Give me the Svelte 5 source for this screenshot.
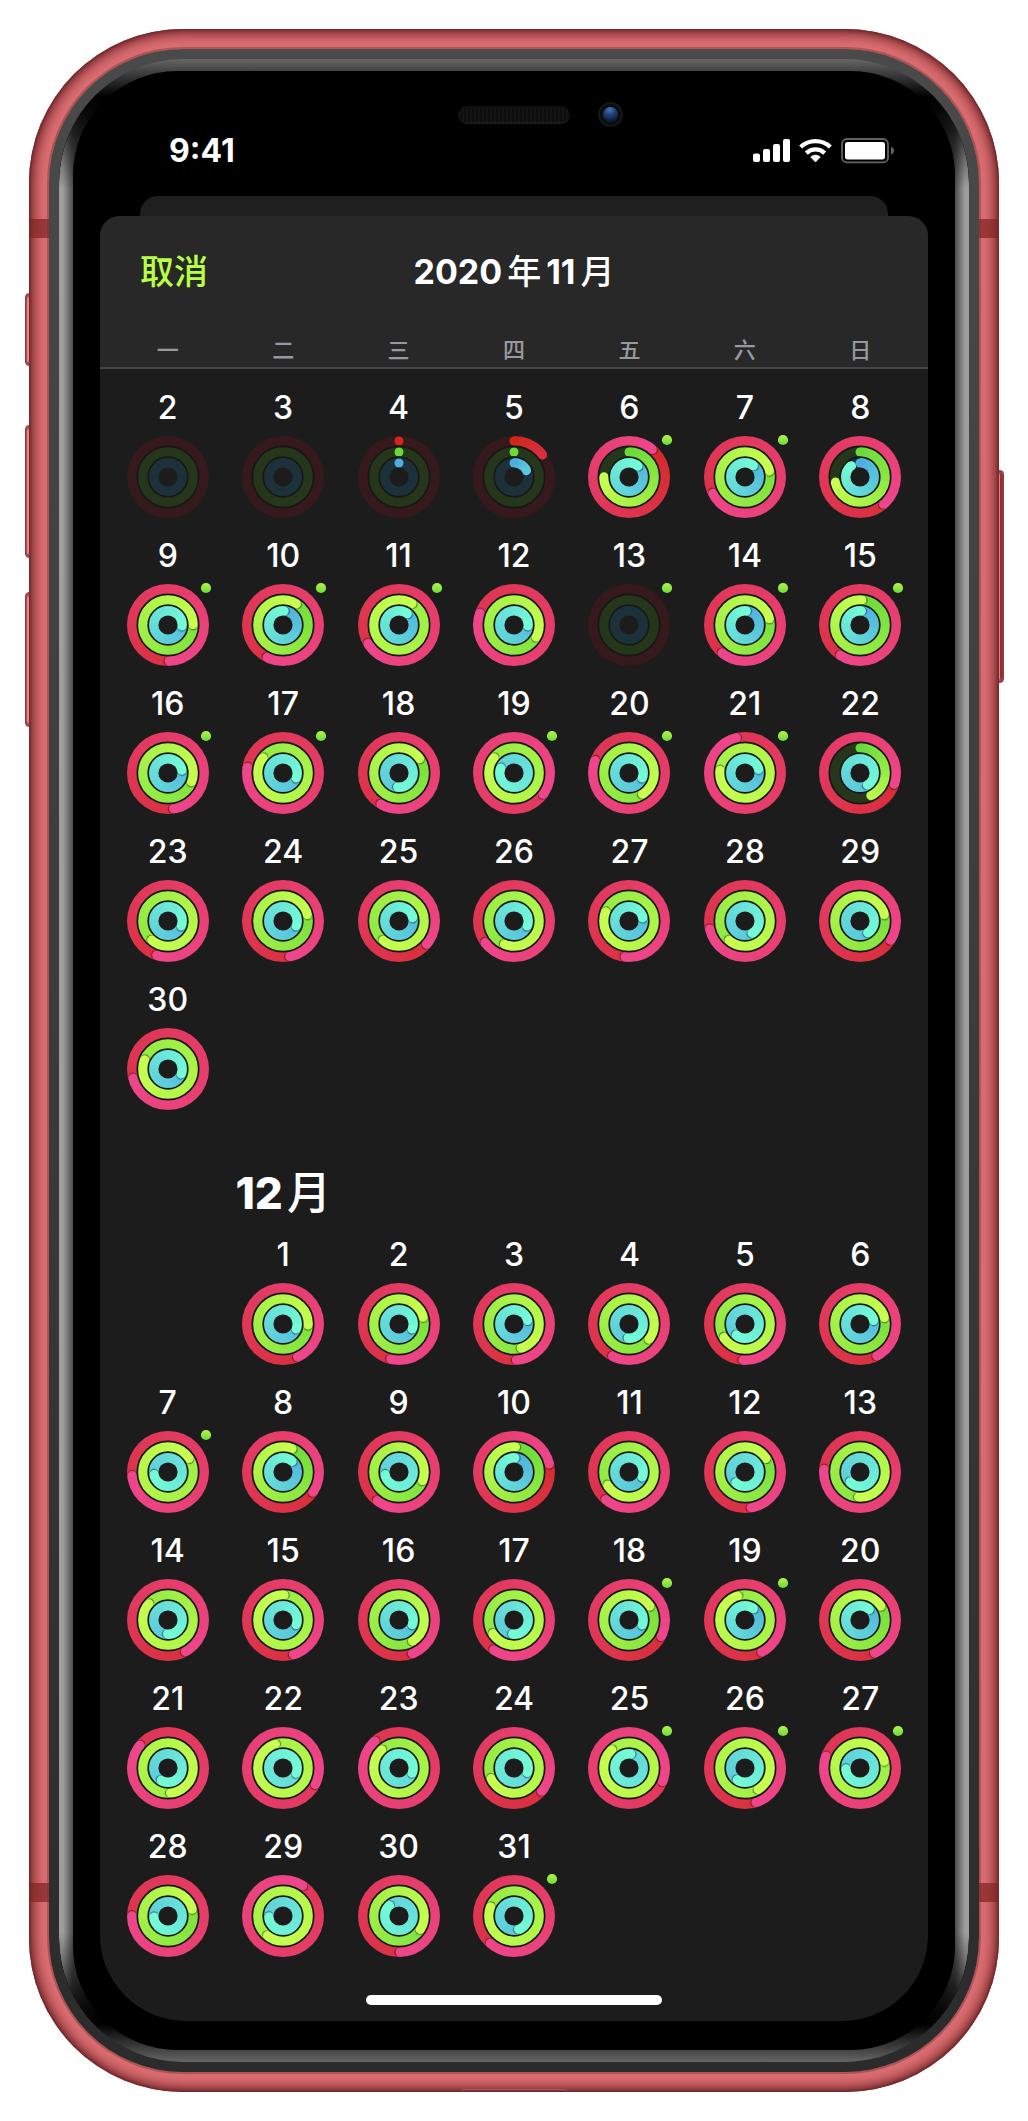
<script lang="ts">
  type Rgb = [number, number, number];
  // Sweep angles in degrees: move, exercise, stand. Past 360 the ring laps itself.
  type Day = { n: number; sweeps: number[]; workout: boolean };

  const day = (n: number, move: number, exercise: number, stand: number, workout = false): Day => ({
    n,
    sweeps: [move, exercise, stand],
    workout,
  });

  const weekdays = ['一', '二', '三', '四', '五', '六', '日'];

  const november: Day[] = [
    day(2, 0, 0, 0), day(3, 0, 0, 0), day(4, 1, 1, 1), day(5, 52, 1, 62),
    day(6, 400, 270, 399, true), day(7, 603, 436, 396, true), day(8, 499, 258, 322),
    day(9, 538, 449, 453, true), day(10, 566, 392, 364, true), day(11, 599, 751, 396, true),
    day(12, 649, 478, 453), day(13, 0, 0, 0, true), day(14, 579, 435, 365, true),
    day(15, 573, 364, 365, true),
    day(16, 531, 470, 438, true), day(17, 639, 667, 470, true), day(18, 570, 415, 545),
    day(19, 846, 667, 650, true), day(20, 650, 507, 470, true), day(21, 706, 996, 434, true),
    day(22, 468, 154, 508),
    day(23, 558, 580, 470), day(24, 529, 435, 470), day(25, 490, 579, 436),
    day(26, 593, 562, 470), day(27, 546, 651, 437), day(28, 617, 579, 509), day(29, 482, 435, 506),
    day(30, 615, 651, 470),
  ];

  const december: Day[] = [
    day(1, 516, 452, 470), day(2, 553, 434, 470), day(3, 536, 523, 435),
    day(4, 567, 487, 543), day(5, 543, 597, 578), day(6, 512, 435, 435),
    day(7, 624, 777, 619, true), day(8, 484, 381, 400), day(9, 577, 470, 619),
    day(10, 437, 363, 363), day(11, 580, 598, 470), day(12, 530, 417, 580), day(13, 634, 543, 584),
    day(14, 511, 670, 541), day(15, 523, 722, 469), day(16, 518, 507, 469),
    day(17, 574, 597, 545), day(18, 477, 416, 470, true), day(19, 512, 703, 396, true),
    day(20, 516, 416, 401),
    day(21, 669, 894, 568), day(22, 837, 1062, 831), day(23, 678, 676, 831),
    day(24, 490, 605, 828), day(25, 832, 1036, 727, true), day(26, 522, 868, 573, true),
    day(27, 649, 794, 626, true),
    day(28, 630, 434, 625), day(29, 753, 938, 626), day(30, 538, 482, 677),
    day(31, 581, 651, 520, true),
  ];

  const rings: { name: string; radius: number; from: Rgb; to: Rgb; dim: string }[] = [
    { name: 'move', radius: 36, from: [208, 38, 30], to: [238, 70, 138], dim: '#36191c' },
    { name: 'exercise', radius: 25, from: [106, 218, 58], to: [200, 255, 80], dim: '#25361b' },
    { name: 'stand', radius: 14, from: [78, 174, 222], to: [116, 252, 214], dim: '#1d313a' },
  ];

  function mix(a: Rgb, b: Rgb, t: number): string {
    return `rgb(${a.map((v, i) => Math.round(v + (b[i] - v) * t)).join(' ')})`;
  }

  // Short sweeps stop before the gradient reaches its bright end.
  function tip(i: number, sweep: number): string {
    return mix(rings[i].from, rings[i].to, Math.min(1, sweep / 180));
  }

  function sweepFill(i: number, sweep: number): string {
    const { from, to, dim } = rings[i];
    if (sweep <= 1) return dim;
    const end = tip(i, sweep);
    if (sweep < 360) {
      return `conic-gradient(${mix(from, to, 0)} 0deg, ${end} ${sweep}deg, ${dim} ${sweep}deg)`;
    }
    const tail = mix(from, to, (sweep - 360) / sweep);
    return `conic-gradient(from ${sweep % 360}deg, ${tail}, ${end})`;
  }
</script>

{#snippet dayCell(d: Day)}
  <button class="day" type="button">
    <span class="number">{d.n}</span>
    <span class="rings">
      {#each rings as ring, i}
        <span class="disc {ring.name}" style:background={sweepFill(i, d.sweeps[i])}></span>
      {/each}
      <svg class="caps" viewBox="0 0 82 82" aria-hidden="true">
        {#each rings as ring, i}
          {@const sweep = d.sweeps[i]}
          {#if sweep > 0}
            {#if sweep < 360}
              <circle cx="41" cy={41 - ring.radius} r="4.5" fill={mix(ring.from, ring.to, 0)} />
            {/if}
            {#if sweep > 1}
              <g transform="rotate({sweep % 360} 41 41)">
                {#if sweep >= 360}
                  <circle cx="43.2" cy={41 - ring.radius} r="4.3" fill="#000" opacity="0.12" />
                  <circle cx="42.2" cy={41 - ring.radius} r="4.5" fill="#000" opacity="0.3" />
                {/if}
                <circle cx="41" cy={41 - ring.radius} r="4.7" fill={tip(i, sweep)} />
              </g>
            {/if}
          {/if}
        {/each}
        <circle cx="41" cy="41" r="30.7" fill="none" stroke="#171717" stroke-width="1.7" />
        <circle cx="41" cy="41" r="19.8" fill="none" stroke="#171717" stroke-width="1.7" />
        <circle cx="41" cy="41" r="9.6" fill="#1c1c1c" />
        {#if d.workout}
          <circle cx="79" cy="4" r="5.1" fill="url(#workout)" />
        {/if}
      </svg>
    </span>
  </button>
{/snippet}

<svg class="defs" width="0" height="0" aria-hidden="true">
  <defs>
    <linearGradient id="workout" x1="0" y1="0" x2="0" y2="1">
      <stop offset="0" stop-color="#b9f24a" />
      <stop offset="1" stop-color="#68dc3b" />
    </linearGradient>
  </defs>
</svg>

<div class="page">
  <div class="device">
    <span class="key mute"></span>
    <span class="key volume-up"></span>
    <span class="key volume-down"></span>
    <span class="key power"></span>
    <div class="shell">
      <span class="antenna upper"></span>
      <span class="antenna lower"></span>
      <span class="lip"></span>
      <div class="bezel">
        <div class="gloss">
          <div class="glass">
            <div class="sensors">
              <span class="speaker"></span>
              <span class="camera"></span>
            </div>
            <div class="status">
              <span class="time">9:41</span>
              <svg class="indicators" viewBox="0 0 142 26" aria-hidden="true">
                <g fill="#fff">
                  <rect x="0" y="15.5" width="7" height="8.5" rx="2" />
                  <rect x="10" y="11" width="7" height="13" rx="2" />
                  <rect x="20" y="6" width="7" height="18" rx="2" />
                  <rect x="30" y="1" width="7" height="23" rx="2" />
                  <path d="M62.5 24 L57.6 19 A7.2 7.2 0 0 1 67.4 19 Z" stroke="#fff" stroke-width="0.6" stroke-linejoin="round" />
                </g>
                <g fill="none" stroke="#fff" stroke-width="4.2">
                  <path d="M53.3 15.1 A13.4 13.4 0 0 1 71.7 15.1" />
                  <path d="M47.6 9 A21.6 21.6 0 0 1 77.4 9" />
                </g>
                <rect x="89" y="1" width="46" height="23.4" rx="5" fill="none" stroke="#626262" stroke-width="1.8" />
                <rect x="92" y="4" width="40" height="17.4" rx="2.6" fill="#fff" />
                <path d="M138 8.8 Q141 10 141 12.7 Q141 15.4 138 16.6 Z" fill="#626262" />
              </svg>
            </div>
            <div class="behind"></div>
            <main class="sheet">
              <header>
                <nav>
                  <button class="cancel" type="button">取消</button>
                  <h1><span>2020</span><span class="han">年</span><span>11</span><span class="han">月</span></h1>
                </nav>
                <div class="weekdays">
                  {#each weekdays as name}<span>{name}</span>{/each}
                </div>
              </header>
              <section class="month first">
                {#each november as d}{@render dayCell(d)}{/each}
              </section>
              <section class="month">
                <span></span>
                <h2><span>12</span><span class="han">月</span></h2>
                <span class="offset"></span>
                {#each december as d}{@render dayCell(d)}{/each}
              </section>
              <div class="home"></div>
            </main>
          </div>
        </div>
      </div>
    </div>
  </div>
</div>

<style>
  :global(body) {
    margin: 0;
    background: #fff;
  }

  .defs {
    position: absolute;
  }

  .page {
    padding: 29px;
    font-family: Inter, 'Noto Sans CJK SC', sans-serif;
    color: #fff;
  }

  .device {
    position: relative;
  }

  .key {
    position: absolute;
    left: -4px;
    width: 8px;
    box-sizing: border-box;
    border-radius: 4px;
    border: 1px solid #8c3a3e;
    background: linear-gradient(to right, #b8565a 1px, #ec888b 1px 3px, #d3676b 3px);
    box-shadow: inset 0 3px 2px #a2484c, inset 0 -3px 2px #a2484c;
  }

  .mute { top: 264px; height: 73px; }
  .volume-up { top: 396px; height: 133px; }
  .volume-down { top: 563px; height: 135px; }

  .power {
    left: auto;
    right: -5px;
    top: 441px;
    width: 9px;
    height: 213px;
    background: linear-gradient(to right, #ec7f84 4px, #8e2f33 4px);
  }

  .shell {
    position: relative;
    padding: 20px;
    border-radius: 154px;
    background: #dc6e72;
    box-shadow:
      inset 0 0 3px 1px #6a2326,
      inset 0 0 8px 3px rgb(106 35 38 / 0.7),
      inset 0 0 14px 5px rgb(124 45 49 / 0.7);
  }

  .antenna {
    position: absolute;
    left: 0;
    right: 0;
    height: 19px;
    background: rgb(128 36 36 / 0.72);
  }

  .upper { top: 190px; }
  .lower { bottom: 190px; }

  .lip {
    position: absolute;
    bottom: 0;
    left: 50%;
    width: 106px;
    height: 3px;
    margin-left: -53px;
    box-sizing: border-box;
    border-top: 1px solid #a9565a;
    border-radius: 6px 6px 0 0;
  }

  .bezel {
    position: relative;
    padding: 10px;
    border-radius: 134px;
    background: linear-gradient(#4a4a4a, #2b2b2b);
    box-shadow: 0 0 0 2px rgb(120 50 54 / 0.45);
  }

  .gloss {
    position: relative;
    padding: 12px 14px;
    border-radius: 124px;
    background:
      linear-gradient(#666, #444 12px, #000 38px, transparent 38px),
      linear-gradient(to top, #666, #444 12px, #000 38px, #000 38px);
  }

  .gloss::before {
    content: '';
    position: absolute;
    inset: 0;
    border-radius: inherit;
    background:
      linear-gradient(to right, #9e9e9e 4px, #4c4c4c 14px, transparent 48px),
      linear-gradient(to left, #9e9e9e 4px, #4c4c4c 14px, transparent 48px);
    mask-image: linear-gradient(transparent 34px, #000 130px calc(100% - 130px), transparent calc(100% - 34px));
  }

  .glass {
    position: relative;
    padding: 31px 27px 29px;
    border-radius: 104px;
    background: #000;
  }

  .sensors {
    display: grid;
    grid-template-columns: 1fr 112px 1fr;
    align-items: center;
    height: 25px;
  }

  .speaker {
    grid-column: 2;
    height: 18px;
    box-sizing: border-box;
    border-radius: 9px;
    border-bottom: 2px solid #1a1a1a;
    background: repeating-linear-gradient(to right, #151515 0 2px, #0d0d0d 2px 4px);
  }

  .camera {
    width: 25px;
    height: 25px;
    margin-left: 28px;
    border-radius: 50%;
    background:
      radial-gradient(circle at 50% 50%, transparent 7px, #0c0c0d 8px 10px, #171717 11px),
      radial-gradient(circle at 46% 30%, #3d6fae 1px, #24477f 5px, #0e1c3c 11px);
  }

  .status {
    display: flex;
    align-items: center;
    justify-content: space-between;
    height: 48px;
    padding: 0 33px 0 69px;
    margin-bottom: 21px;
  }

  .time {
    font-size: 32px;
    line-height: 40px;
    font-weight: 700;
  }

  .indicators {
    width: 142px;
    height: 26px;
  }

  .behind {
    height: 20px;
    margin: 0 40px;
    border-radius: 18px 18px 0 0;
    background: #1f1f1f;
  }

  .sheet {
    display: block;
    overflow: hidden;
    border-radius: 20px 20px 86px 86px;
    background: #1c1c1c;
  }

  header {
    border-bottom: 2px solid #464646;
    background: #282828;
  }

  nav {
    display: grid;
    grid-template-columns: 1fr auto 1fr;
    align-items: center;
    height: 112px;
    padding: 0 40px;
  }

  button {
    margin: 0;
    padding: 0;
    border: 0;
    background: none;
    color: inherit;
    font: inherit;
  }

  .cancel {
    justify-self: start;
    color: #b6ff42;
    font-size: 34px;
    line-height: 44px;
    font-weight: 500;
  }

  h1,
  h2 {
    display: flex;
    align-items: baseline;
    justify-content: center;
    margin: 0;
  }

  h1 {
    gap: 5px;
    font-size: 34px;
    line-height: 44px;
    font-weight: 700;
  }

  .han {
    font-weight: 500;
  }

  .weekdays,
  .month {
    display: grid;
    grid-template-columns: repeat(7, 1fr);
    padding: 0 10px;
  }

  .weekdays {
    height: 34px;
    padding-top: 5px;
    color: #98989f;
    font-size: 22px;
    line-height: 34px;
    font-weight: 500;
    text-align: center;
  }

  .first {
    padding-top: 17px;
  }

  h2 {
    gap: 4px;
    height: 107px;
    font-size: 44px;
    line-height: 134px;
    font-weight: 800;
    white-space: nowrap;
  }

  .offset {
    grid-column: 1;
  }

  .day {
    display: grid;
    justify-items: center;
    align-content: start;
    gap: 6px;
    height: 148px;
  }

  .number {
    font-size: 32px;
    line-height: 44px;
    font-weight: 500;
  }

  .rings {
    display: grid;
    place-items: center;
    width: 82px;
    height: 82px;
  }

  .disc,
  .caps {
    grid-area: 1 / 1;
    border-radius: 50%;
  }

  .move { width: 82px; height: 82px; }
  .exercise { width: 62px; height: 62px; }
  .stand { width: 40px; height: 40px; }

  .caps {
    width: 82px;
    height: 82px;
    overflow: visible;
  }

  .home {
    width: 296px;
    height: 10px;
    margin: 22px auto 16px;
    border-radius: 5px;
    background: #fff;
  }
</style>
